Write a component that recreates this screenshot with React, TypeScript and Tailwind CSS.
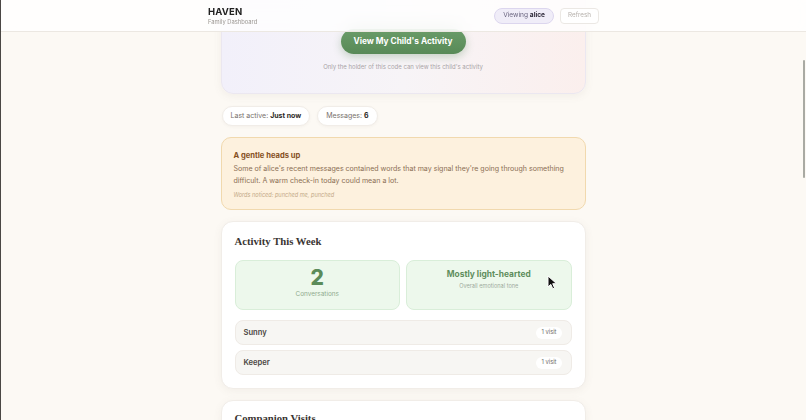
import React from "react"

const companions = [
  { name: "Sunny", visits: 1 },
  { name: "Keeper", visits: 1 },
]

function Cursor() {
  return (
    <svg
      className="absolute left-[547px] top-[275px] z-20"
      width="11"
      height="15"
      viewBox="0 0 11 15"
    >
      <path
        d="M1 1 L1 12 L3.8 9.4 L5.8 13.8 L7.6 13 L5.7 8.7 L9.6 8.7 Z"
        fill="#111"
        stroke="#fff"
        strokeWidth="1"
        strokeLinejoin="round"
      />
    </svg>
  )
}

export default function App() {
  return (
    <div className="relative h-[420px] overflow-hidden bg-[#fcf9f4] font-['Inter','Noto_Sans',sans-serif] text-[#3b3633]">
      {/* window edge + overlay scrollbar */}
      <div className="absolute left-0 top-0 z-30 h-full w-px bg-[#4a4744]" />
      <div className="absolute right-[1px] top-[60px] z-30 h-[118px] w-[2px] rounded-full bg-[#a9aaa3]" />

      {/* Header */}
      <header className="absolute inset-x-0 top-0 z-10 h-8 border-b border-[#ece8e2] bg-white/80 backdrop-blur-sm">
        <div className="mx-auto flex h-full w-[392px] items-center justify-between pl-px">
          <div className="flex flex-col leading-none">
            <span className="text-[9.5px] font-bold tracking-[0.02em] text-[#222]">HAVEN</span>
            <span className="mt-[2.5px] text-[5.8px] text-[#9a9590]">Family Dashboard</span>
          </div>
          <div className="flex items-center gap-[6px]">
            <div className="flex h-[16px] items-center rounded-full border border-[#dcd6ee] bg-[#f0edf8] px-[8px] text-[6.6px] text-[#6b6680]">
              Viewing&nbsp;<span className="font-bold text-[#2f2a3a]">alice</span>
            </div>
            <button className="flex h-[16px] items-center rounded-[4px] border border-[#ebe8e4] bg-white px-[7px] text-[6.3px] text-[#b5b0ab]">
              Refresh
            </button>
          </div>
        </div>
      </header>

      <main className="mx-auto flex w-[365px] flex-col">
        {/* Access card (scrolled partly out of view) */}
        <section className="-mt-[20px] flex flex-col items-center rounded-[12px] border border-[#ebe7f0] bg-gradient-to-r from-[#f2f0fa] via-[#f7f4f7] to-[#fbefed] px-4 pb-[21px] pt-[48px] shadow-[0_2px_8px_rgba(120,100,90,0.08)]">
          <button className="flex h-[25px] w-[125px] items-center justify-center rounded-full bg-gradient-to-b from-[#6a9c69] to-[#588a57] text-[8.3px] font-bold text-white shadow-[0_3px_8px_rgba(80,130,80,0.3)]">
            View My Child's Activity
          </button>
          <p className="mt-[8px] text-[6px] leading-[10px] text-[#a8a3a6]">
            Only the holder of this code can view this child's activity
          </p>
        </section>

        {/* Status pills */}
        <div className="mt-[12px] flex gap-[7px] pl-px">
          <div className="flex h-[20px] items-center rounded-full border border-[#f1ede8] bg-white px-[8px] text-[7px] text-[#77716c] shadow-[0_1px_3px_rgba(120,100,80,0.06)]">
            Last active:&nbsp;<span className="font-bold text-[#2d2926]">Just now</span>
          </div>
          <div className="flex h-[20px] items-center rounded-full border border-[#f1ede8] bg-white px-[8px] text-[7px] text-[#77716c] shadow-[0_1px_3px_rgba(120,100,80,0.06)]">
            Messages:&nbsp;<span className="font-bold text-[#2d2926]">6</span>
          </div>
        </div>

        {/* Heads up */}
        <section className="mt-[11px] h-[73px] rounded-[10px] border border-[#f1d9ae] bg-[#fdf1de] px-[12px] pt-[13px]">
          <h3 className="text-[7.6px] font-bold leading-[10px] text-[#85501f]">A gentle heads up</h3>
          <p className="mt-[2px] text-[7.05px] leading-[12px] text-[#8b6f55]">
            Some of alice's recent messages contained words that may signal they're going through something
            difficult. A warm check-in today could mean a lot.
          </p>
          <p className="mt-[3px] text-[5.6px] italic leading-[10px] text-[#c4aa88]">
            Words noticed: punched me, punched
          </p>
        </section>

        {/* Activity */}
        <section className="mt-[11px] rounded-[12px] border border-[#f1ede8] bg-white px-[13px] pb-[13px] pt-[12px] shadow-[0_2px_8px_rgba(120,100,80,0.07)]">
          <h2 className="font-['Liberation_Serif',serif] text-[10.7px] font-bold leading-[14px] text-[#3a3532]">
            Activity This Week
          </h2>
          <div className="mt-[12px] grid grid-cols-2 gap-[6px]">
            <div className="flex h-[50px] flex-col items-center rounded-[8px] border border-[#d9eed9] bg-[#edf8ec] pt-[6px]">
              <span className="text-[21px] font-extrabold leading-[21px] text-[#5b8b59]">2</span>
              <span className="mt-[2px] text-[6.4px] leading-[9px] text-[#8fab8e]">Conversations</span>
            </div>
            <div className="flex h-[50px] flex-col items-center rounded-[8px] border border-[#d9eed9] bg-[#edf8ec] pt-[7px]">
              <span className="text-[8.4px] font-bold leading-[13px] text-[#5f8e5d]">Mostly light-hearted</span>
              <span className="mt-[1px] text-[5.6px] leading-[9px] text-[#9eab9d]">Overall emotional tone</span>
            </div>
          </div>
          <div className="mt-[10px] flex flex-col gap-[5px]">
            {companions.map((c) => (
              <div
                key={c.name}
                className="flex h-[25px] items-center justify-between rounded-[8px] border border-[#efebe6] bg-[#f7f6f3] pl-[8px] pr-[9px]"
              >
                <span className="text-[7.6px] font-semibold text-[#4a4541]">{c.name}</span>
                <span className="flex h-[12px] items-center rounded-full bg-white px-[5px] text-[5.8px] text-[#6f6a66]">
                  {c.visits} visit
                </span>
              </div>
            ))}
          </div>
        </section>

        {/* Companion visits (cut off at the bottom of the window) */}
        <section className="mt-[11px] h-[80px] rounded-[12px] border border-[#f1ede8] bg-white px-[13px] pt-[10px] shadow-[0_2px_8px_rgba(120,100,80,0.07)]">
          <h2 className="font-['Liberation_Serif',serif] text-[10.7px] font-bold leading-[14px] text-[#3a3532]">
            Companion Visits
          </h2>
        </section>
      </main>

      <Cursor />
    </div>
  )
}
